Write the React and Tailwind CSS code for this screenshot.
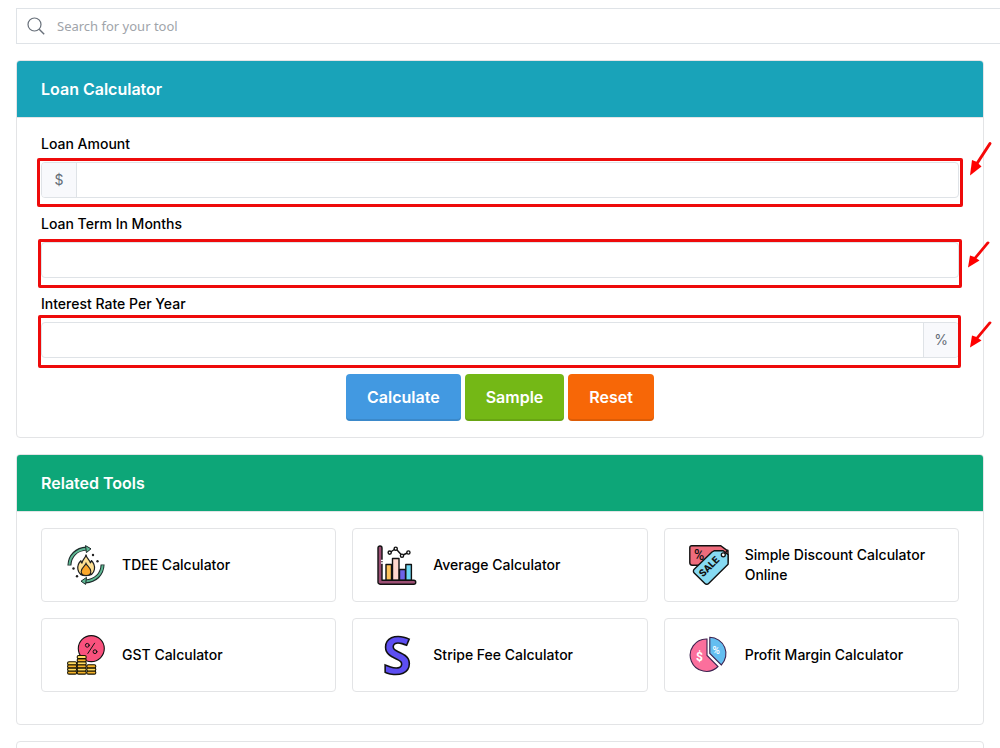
import React from 'react';

function TdeeIcon() {
    return (
        <svg viewBox="0 0 40 40" className="size-10 shrink-0" aria-hidden="true">
            <g fill="none">
                <path d="M3.400 20.500C3.800 10.500 10.500 4.200 20.500 3.600" stroke="#1c2b2b" strokeWidth="4" />
                <path d="M3.400 19.800C3.900 10.800 10.800 4.400 20.500 3.700" stroke="#5fb894" strokeWidth="2" />
                <path d="M36.600 19.500C36.200 29.500 29.500 35.800 19.500 36.400" stroke="#1c2b2b" strokeWidth="4" />
                <path d="M36.600 20.200C36.100 29.200 29.200 35.600 19.500 36.300" stroke="#5fb894" strokeWidth="2" />
            </g>
            <path d="M19.500 .6 25 3.800 20.400 7.600Z" fill="#5fb894" stroke="#1c2b2b" strokeLinejoin="round" />
            <path d="M20.500 32.400 15 36.200 19.600 39.400Z" fill="#5fb894" stroke="#1c2b2b" strokeLinejoin="round" />
            <path
                d="M20 9.800c.5 3.500 3.600 5.200 4.400 8 .8-.6 1-1.500 1-2.300 2.300 2.400 3.600 5.500 3 8.800-.7 4-4 6.300-8.200 6.300s-7.700-2.300-8.300-6.300c-.5-3.300.6-6.400 3-8.600.1 1 .4 1.800 1 2.400.4-3.200 3.600-5 4.100-8.300Z"
                fill="#ffe092"
                stroke="#202020"
                strokeWidth="1.2"
                strokeLinejoin="round"
            />
            <path
                d="M20 18.500c.8 2.400 4.800 4.200 4.800 7.900 0 2.500-2 4.100-4.700 4.100s-4.900-1.600-4.900-4.100c0-3.700 4-5.400 4.800-7.900Z"
                fill="#fba72b"
                stroke="#202020"
                strokeWidth="1.1"
            />
            <g fill="#202020">
                <circle cx="27" cy="10" r="1.2" />
                <circle cx="31.5" cy="16.3" r="1.2" />
                <circle cx="7.5" cy="23.5" r="1.2" />
                <circle cx="11" cy="31.3" r="1.2" />
            </g>
        </svg>
    );
}

function AverageIcon() {
    return (
        <svg viewBox="0 0 40 40" className="size-10 shrink-0" aria-hidden="true">
            <g stroke="#111" strokeWidth="1.4" strokeLinejoin="round">
                <path d="M9 19.500h5.500v16H9Z" fill="#ffc45c" />
                <path d="M15.500 13.500h6.500v22h-6.500Z" fill="#ffd7cd" />
                <path d="M22.500 24.500h6v11h-6Z" fill="#6d63e8" />
                <path d="M28.800 19.500h5.600v16h-5.600Z" fill="#6ed9f5" />
                <path d="M1 3a2 2 0 0 1 4 0v32.300h31.800a1.900 1.900 0 0 1 0 3.900H3a2 2 0 0 1-2-2Z" fill="#9c4f74" />
                <path d="m13 7.500 5.700-4 6.300 7 6.300-3" fill="none" />
                <circle cx="12.7" cy="7.6" r="1.6" fill="#fff" />
                <circle cx="18.7" cy="3.7" r="1.6" fill="#fff" />
                <circle cx="25" cy="10.7" r="1.6" fill="#fff" />
                <circle cx="31.4" cy="7.5" r="1.6" fill="#fff" />
            </g>
            <path d="M4 15.500h3M4 18h2" stroke="#fff" strokeWidth="1.4" />
        </svg>
    );
}

function DiscountIcon() {
    return (
        <svg viewBox="0 0 40 40" className="size-10 shrink-0" aria-hidden="true">
            <path
                d="M2.700.8h29L39 6.200v9.200c0 3-1.200 4.800-3.500 4.800H3.200a2.400 2.400 0 0 1-2.400-2.400V2.800c0-1.200.7-2 1.900-2Z"
                fill="#ee6c7c"
                stroke="#111"
                strokeWidth="1.4"
            />
            <text x="5" y="15" fontSize="14" fontWeight="500" fontFamily="Roboto, sans-serif" fill="#111">%</text>
            <path
                d="M25.500 5.700h8.700l4.900 4v9.500L19.600 38.500a2.600 2.600 0 0 1-3.700 0L5.200 28a2.600 2.600 0 0 1 0-3.700L23 7Z"
                fill="#86daf3"
                stroke="#111"
                strokeWidth="1.4"
                strokeLinejoin="round"
            />
            <circle cx="34.3" cy="9.8" r="2" fill="#fff" stroke="#111" strokeWidth="1.3" />
            <path d="m35.500 8.500 3.800-3.800" stroke="#111" strokeWidth="1.3" />
            <text
                transform="translate(14 32.500) rotate(-45)"
                fontSize="10"
                fontWeight="900"
                fontFamily="Roboto, sans-serif"
                fill="#111"
            >
                SALE
            </text>
        </svg>
    );
}

// columns of coins, counted upwards from the bottom
const COIN_STACKS = [
    { x: 1.6, coins: 4 },
    { x: 11.2, coins: 6 },
    { x: 20.8, coins: 3 },
];

function GstIcon() {
    return (
        <svg viewBox="0 0 40 40" className="size-10 shrink-0" aria-hidden="true">
            <circle cx="25.3" cy="13.6" r="13" fill="#f9517d" stroke="#111" strokeWidth="1.1" />
            <g fill="none" stroke="#111" strokeLinecap="round">
                <circle cx="21.3" cy="10.3" r="1.9" />
                <circle cx="29" cy="16.7" r="1.9" />
                <path d="m28.600 8.200-6.800 10.300" />
            </g>
            {COIN_STACKS.map((stack) =>
                Array.from({ length: stack.coins }, (_, i) => (
                    <rect
                        key={`${stack.x}-${i}`}
                        x={stack.x}
                        y={36 - i * 3.1}
                        width="9"
                        height="3.1"
                        rx="1.4"
                        fill={i % 2 === 0 ? '#f6b328' : '#ffdc62'}
                        stroke="#191400"
                        strokeWidth="1.1"
                    />
                ))
            )}
        </svg>
    );
}

function StripeIcon() {
    return (
        <svg viewBox="0 0 40 40" className="size-10 shrink-0 overflow-visible" aria-hidden="true">
            <text
                x="20"
                y="38.5"
                textAnchor="middle"
                fontSize="52"
                fontWeight="700"
                fontFamily="'Noto Sans', sans-serif"
                fill="#5d4ef2"
                stroke="#111"
                strokeWidth="1.6"
            >
                S
            </text>
        </svg>
    );
}

function ProfitIcon() {
    return (
        <svg viewBox="0 0 40 40" className="size-10 shrink-0" aria-hidden="true">
            <path d="M18 4v16.500l11 11A16.200 16.200 0 1 1 18 4Z" fill="#fb6f9c" stroke="#3d2350" strokeWidth="1.1" />
            <path d="M20.800 2.300A16.300 16.300 0 0 1 32.300 30L20.800 18.500Z" fill="#64bef0" stroke="#3d2350" strokeWidth="1.1" />
            <g fill="#fff" fontFamily="Roboto, sans-serif">
                <text x="7" y="26" fontSize="12" fontWeight="700">$</text>
                <text x="23.5" y="19" fontSize="10" fontWeight="500">%</text>
            </g>
        </svg>
    );
}

const TOOLS = [
    { name: 'TDEE Calculator', Icon: TdeeIcon },
    { name: 'Average Calculator', Icon: AverageIcon },
    { name: 'Simple Discount Calculator Online', Icon: DiscountIcon },
    { name: 'GST Calculator', Icon: GstIcon },
    { name: 'Stripe Fee Calculator', Icon: StripeIcon },
    { name: 'Profit Margin Calculator', Icon: ProfitIcon },
];

function Card({ title, headerClass, children }) {
    return (
        <section className="rounded border border-[#e3e4e6] bg-white">
            <h2
                className={`rounded-t-[3px] border-b border-[#e3e4e6] bg-clip-padding px-6 py-4 text-base leading-6 font-semibold text-white ${headerClass}`}
            >
                {title}
            </h2>
            {children}
        </section>
    );
}

// red frame and arrow that point out a field
function Highlight({ frameClass, arrowClass }) {
    return (
        <>
            <span className={`pointer-events-none absolute rounded-xs border-3 border-[#ee0b0b] ${frameClass}`} />
            <svg
                viewBox="0 0 24 36"
                preserveAspectRatio="none"
                className={`pointer-events-none absolute w-6 ${arrowClass}`}
                aria-hidden="true"
            >
                <path d="M21 3.500 7 25" stroke="#f50808" strokeWidth="3" strokeLinecap="round" />
                <path d="M1 35.500 3 20l4.500 1.800 5 4.700Z" fill="#ff0000" />
            </svg>
        </>
    );
}

function Field({ id, label, prefix, suffix, frameClass, arrowClass }) {
    return (
        <div className="mb-4">
            <label htmlFor={id} className="mb-2 block text-sm leading-5 font-medium text-black">
                {label}
            </label>
            <div className="relative">
                <div className="flex h-9 overflow-hidden rounded border border-[#dfe3e7]">
                    {prefix && (
                        <span className="flex w-[35px] items-center justify-center border-r border-[#dfe3e7] bg-[#f8f9fc] text-sm text-[#656d77]">
                            {prefix}
                        </span>
                    )}
                    <input id={id} type="text" className="min-w-0 flex-1 px-3 text-sm outline-none" />
                    {suffix && (
                        <span className="flex w-[35px] items-center justify-center border-l border-[#dfe3e7] bg-[#f8f9fc] text-sm text-[#656d77]">
                            {suffix}
                        </span>
                    )}
                </div>
                <Highlight frameClass={frameClass} arrowClass={arrowClass} />
            </div>
        </div>
    );
}

function ActionButton({ colorClass, ...props }) {
    return (
        <button
            className={`rounded px-[21px] pt-[11px] pb-3 text-base leading-6 font-semibold text-white shadow-[inset_0_-2px_0_rgba(0,0,0,0.1)] ${colorClass}`}
            {...props}
        />
    );
}

export default function App() {
    return (
        <div className="h-screen overflow-hidden bg-white pt-2 font-['Inter',sans-serif]">
            <label className="ml-4 flex h-9 items-center gap-3 border border-r-0 border-[#dfe3e7] px-2.5">
                <svg viewBox="0 0 18 18" className="size-4.5 shrink-0" fill="none" stroke="#68707a" aria-hidden="true">
                    <circle cx="7.5" cy="7.5" r="6.5" strokeWidth="1.2" />
                    <path d="m12.200 12.200 5 5" strokeWidth="1.4" />
                </svg>
                <input
                    type="search"
                    placeholder="Search for your tool"
                    className="min-w-0 flex-1 font-['Noto_Sans',sans-serif] text-[13px] leading-5 outline-none placeholder:text-[#a0a4aa]"
                />
            </label>

            <main className="mx-4 mt-4 flex flex-col gap-4">
                <Card title="Loan Calculator" headerClass="bg-[#19a3b9]">
                    <form className="px-6 py-4" onSubmit={(e) => e.preventDefault()}>
                        <Field
                            id="amount"
                            label="Loan Amount"
                            prefix="$"
                            frameClass="-top-1 -right-1 -bottom-[9px] -left-1"
                            arrowClass="-top-[22px] -right-[34px] h-9"
                        />
                        <Field
                            id="term"
                            label="Loan Term In Months"
                            frameClass="-top-[3px] -right-[3px] -bottom-2.5 -left-[3px]"
                            arrowClass="-top-0.5 -right-8 h-7"
                        />
                        <Field
                            id="rate"
                            label="Interest Rate Per Year"
                            suffix="%"
                            frameClass="-top-[7px] -right-0.5 -bottom-2.5 -left-[3px]"
                            arrowClass="-top-0.5 -right-[34px] h-7"
                        />
                        <div className="flex justify-center gap-1">
                            <ActionButton type="submit" colorClass="bg-[#4299e1]">Calculate</ActionButton>
                            <ActionButton type="button" colorClass="bg-[#74b816]">Sample</ActionButton>
                            <ActionButton type="reset" colorClass="bg-[#f76707]">Reset</ActionButton>
                        </div>
                    </form>
                </Card>

                <Card title="Related Tools" headerClass="bg-[#0da678]">
                    <ul className="grid grid-cols-3 gap-4 px-6 pt-4 pb-8">
                        {TOOLS.map(({ name, Icon }) => (
                            <li key={name}>
                                <a href="#" className="flex items-center gap-4 rounded border border-[#e3e4e6] px-6 py-4">
                                    <Icon />
                                    <span className="text-sm leading-5 font-medium text-black">{name}</span>
                                </a>
                            </li>
                        ))}
                    </ul>
                </Card>

                <section className="h-16 rounded border border-[#e3e4e6]" />
            </main>
        </div>
    );
}
